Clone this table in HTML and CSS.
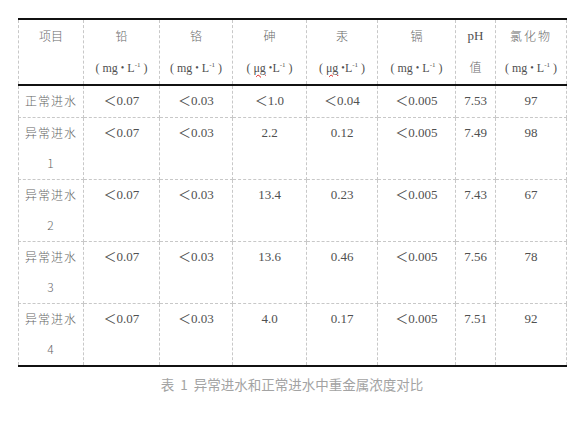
FILE: index.html
```html
<!DOCTYPE html>
<html lang="zh">
<head>
<meta charset="utf-8">
<link rel="stylesheet" href="styles.css">
</head>
<body>
<div class="page">
<table class="data">
  <colgroup>
    <col class="c1"><col class="c2"><col class="c3"><col class="c4"><col class="c5"><col class="c6"><col class="c7"><col class="c8">
  </colgroup>
  <thead>
    <tr>
      <th><span class="cjk">项目</span><br>&nbsp;</th>
      <th><span class="cjk">铅</span><br><span class="unit"><span class="po">(</span>mg <span class="dot">•</span> L<sup>-1</sup><span class="pc">)</span></span></th>
      <th><span class="cjk">铬</span><br><span class="unit"><span class="po">(</span>mg <span class="dot">•</span> L<sup>-1</sup><span class="pc">)</span></span></th>
      <th><span class="cjk">砷</span><br><span class="unit"><span class="po">(</span><span class="wavy">μg</span> <span class="dot">•</span>L<sup>-1</sup><span class="pc">)</span></span></th>
      <th><span class="cjk">汞</span><br><span class="unit"><span class="po">(</span><span class="wavy">μg</span> <span class="dot">•</span>L<sup>-1</sup><span class="pc">)</span></span></th>
      <th><span class="cjk">镉</span><br><span class="unit"><span class="po">(</span>mg <span class="dot">•</span> L<sup>-1</sup><span class="pc">)</span></span></th>
      <th>pH<br><span class="cjk">值</span></th>
      <th><span class="cjk sp">氯化物</span><br><span class="unit"><span class="po">(</span>mg <span class="dot">•</span> L<sup>-1</sup><span class="pc">)</span></span></th>
    </tr>
  </thead>
  <tbody>
    <tr><td>正常进水</td><td>＜0.07</td><td>＜0.03</td><td>＜1.0</td><td>＜0.04</td><td>＜0.005</td><td>7.53</td><td>97</td></tr>
    <tr><td>异常进水<br>1</td><td>＜0.07</td><td>＜0.03</td><td>2.2</td><td>0.12</td><td>＜0.005</td><td>7.49</td><td>98</td></tr>
    <tr><td>异常进水<br>2</td><td>＜0.07</td><td>＜0.03</td><td>13.4</td><td>0.23</td><td>＜0.005</td><td>7.43</td><td>67</td></tr>
    <tr><td>异常进水<br>3</td><td>＜0.07</td><td>＜0.03</td><td>13.6</td><td>0.46</td><td>＜0.005</td><td>7.56</td><td>78</td></tr>
    <tr><td>异常进水<br>4</td><td>＜0.07</td><td>＜0.03</td><td>4.0</td><td>0.17</td><td>＜0.005</td><td>7.51</td><td>92</td></tr>
  </tbody>
</table>
<p class="caption">表 1 异常进水和正常进水中重金属浓度对比</p>
</div>
</body>
</html>
```

FILE: styles.css
```css
html, body {
  margin: 0;
  padding: 0;
  background: #ffffff;
}
.page {
  padding: 18px 12px 0 18px;
  width: 548px;
}
.data {
  width: 548px;
  border-collapse: collapse;
  table-layout: fixed;
  font-family: "Liberation Serif", "Noto Sans CJK SC", serif;
  font-size: 13px;
  color: #505050;
  border-top: 2px solid #111;
  border-bottom: 2px solid #111;
}
.c1 { width: 65px; }
.c2 { width: 76px; }
.c3 { width: 73px; }
.c4 { width: 74px; }
.c5 { width: 71px; }
.c6 { width: 78px; }
.c7 { width: 40px; }
.c8 { width: 71px; }
.data th,
.data td {
  font-weight: normal;
  text-align: center;
  vertical-align: top;
  line-height: 30.5px;
  padding: 0;
  border: 1px dashed #c8c8c8;
  white-space: nowrap;
}
.data thead th {
  border-top: 2px solid #111;
  border-bottom: 2px solid #111;
  line-height: 31px;
}
.data tbody tr:last-child td {
  border-bottom: 2px solid #111;
}
.data td:first-child {
  font-family: "Noto Sans CJK SC", sans-serif;
  font-size: 12px;
  font-weight: 300;
  letter-spacing: 1px;
  color: #666;
}
.cjk {
  font-family: "Noto Sans CJK SC", sans-serif;
  font-size: 12px;
  font-weight: 300;
  color: #6a6a6a;
}
.sp {
  letter-spacing: 2px;
}
.unit {
  font-size: 12px;
}
.po { margin-right: 3px; }
.pc { margin-left: 3px; }
.unit sup {
  font-size: 7px;
  vertical-align: 5px;
  line-height: 0;
}
.dot {
  font-size: 10px;
  position: relative;
  top: -1px;
}
.wavy {
  text-decoration: underline wavy #d22;
  text-decoration-thickness: 1px;
  text-underline-offset: 2px;
}
.caption {
  margin: 6px 0 0 0;
  text-align: center;
  font-family: "Noto Sans CJK SC", sans-serif;
  font-size: 13.5px;
  word-spacing: 3px;
  color: #a3a3a3;
  line-height: 22px;
}
```
